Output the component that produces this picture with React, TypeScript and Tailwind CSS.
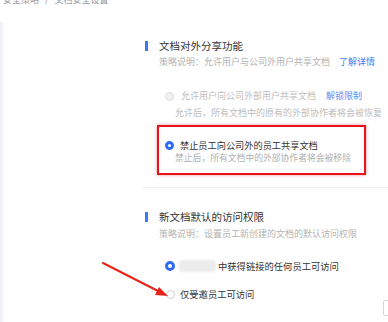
import React from "react";

const font = { fontFamily: '"Noto Sans CJK SC", "Noto Sans", sans-serif' };

export default function App() {
  return (
    <div className="relative w-[388px] h-[322px] overflow-hidden bg-white" style={font}>
      {/* breadcrumb */}
      <div className="-mt-[6px] h-[12px] pl-[3px] text-[9px] leading-[12px] text-[#9a9a9a] flex gap-[6px]">
        <span>安全策略</span>
        <span>/</span>
        <span>文档安全设置</span>
      </div>

      <div className="mt-[16px] flex h-[400px]">
        <div className="w-[3px] bg-[#f1f1f6]" />
        <div className="flex-1 pl-[142px]">
          {/* Section 1 */}
          <div className="pt-[17px]">
            <div className="flex items-center h-[14px]">
              <div className="w-[3px] h-[10px] bg-[#3a7af2]" />
              <span className="ml-[11px] text-[10.5px] leading-[14px] text-[#333]">文档对外分享功能</span>
            </div>
            <div className="mt-[2px] pl-[14px] text-[9px] leading-[14px] text-[#b3b3b3] whitespace-nowrap">
              策略说明：允许用户与公司外用户共享文档
              <span className="ml-[9px] text-[#3d7cf4]">了解详情</span>
            </div>

            <div className="mt-[20px] pl-[20px] flex items-center h-[14px] whitespace-nowrap">
              <div className="w-[9px] h-[9px] rounded-full border border-[#dcdcdc] bg-[#f0f0f0]" />
              <span className="ml-[7px] text-[9px] leading-[14px] text-[#c0c0c0]">允许用户向公司外部用户共享文档</span>
              <span className="ml-[10px] text-[9px] leading-[14px] text-[#5b8ef5]">解锁限制</span>
            </div>
            <div className="mt-[3px] pl-[30px] text-[9px] leading-[14px] text-[#bdbdbd] whitespace-nowrap">
              允许后，所有文档中的原有的外部协作者将会被恢复
            </div>

            <div className="mt-[5px] ml-[12px] w-[209px] border-2 border-[#e8141b] shadow-[0_0_3px_rgba(232,20,27,0.45)] pt-[11px] pb-[8px] pl-[6px]">
              <div className="flex items-center h-[14px] whitespace-nowrap">
                <div className="w-[9px] h-[9px] rounded-full border-[3px] border-[#2e6cf6] bg-white" />
                <span className="ml-[6px] text-[9.2px] leading-[14px] text-[#333]">禁止员工向公司外的员工共享文档</span>
              </div>
              <div className="-mt-[1px] pl-[10px] text-[8.8px] leading-[14px] text-[#b0b0b0] whitespace-nowrap">
                禁止后，所有文档中的外部协作者将会被移除
              </div>
            </div>
          </div>

          <div className="mt-[12px] -ml-[2px] h-px bg-[#ececec]" />

          {/* Section 2 */}
          <div className="mt-[22px]">
            <div className="flex items-center h-[14px]">
              <div className="w-[3px] h-[10px] bg-[#3a7af2]" />
              <span className="ml-[11px] text-[10.5px] leading-[14px] text-[#333]">新文档默认的访问权限</span>
            </div>
            <div className="mt-[3px] pl-[14px] text-[9px] leading-[14px] text-[#b3b3b3] whitespace-nowrap">
              策略说明：设置员工新创建的文档的默认访问权限
            </div>

            <div className="mt-[18px] pl-[20px] flex items-center h-[14px] whitespace-nowrap">
              <div className="w-[10px] h-[10px] rounded-full border-[3px] border-[#2e6cf6] bg-white" />
              <div className="ml-[4px] w-[37px] h-[12px] rounded-[3px] bg-[#ececec] blur-[1px]" />
              <span className="ml-[2px] text-[9.3px] leading-[14px] text-[#333]">中获得链接的任何员工可访问</span>
            </div>

            <div className="mt-[14px] pl-[21px] flex items-center h-[14px] whitespace-nowrap">
              <div className="w-[9px] h-[9px] rounded-full border border-[#cfcfcf] bg-white" />
              <span className="ml-[5px] text-[9.3px] leading-[14px] text-[#333]">仅受邀员工可访问</span>
            </div>
          </div>
        </div>
      </div>

      {/* red arrow annotation */}
      <svg className="absolute left-0 top-0 pointer-events-none" width="388" height="322">
        <line x1="103" y1="263" x2="160" y2="292" stroke="#e5231b" strokeWidth="2" strokeLinecap="round" />
        <polygon points="168,296 155,295 159,287" fill="#e5231b" />
      </svg>

      {/* floating button cut at right edge */}
      <div className="absolute left-[383px] top-[300px] w-[12px] h-[16px] rounded-[2px] border border-[#d6d6d6] bg-white" />
    </div>
  );
}
